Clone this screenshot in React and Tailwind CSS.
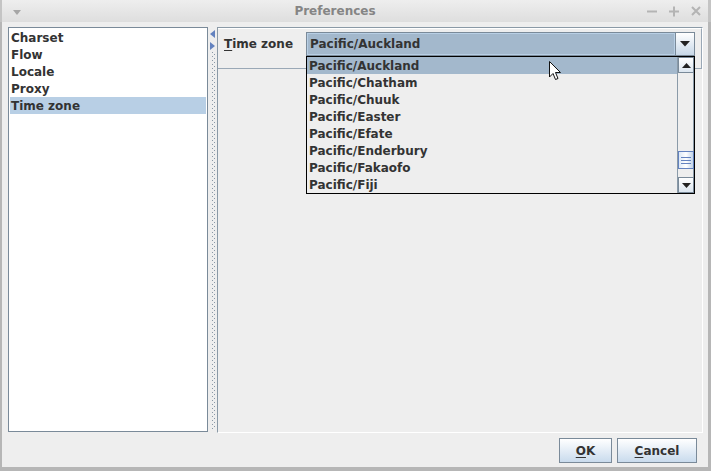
export default function App() {
  const zones = [
    "Pacific/Auckland",
    "Pacific/Chatham",
    "Pacific/Chuuk",
    "Pacific/Easter",
    "Pacific/Efate",
    "Pacific/Enderbury",
    "Pacific/Fakaofo",
    "Pacific/Fiji",
  ];
  const items = ["Charset", "Flow", "Locale", "Proxy", "Time zone"];
  return (
    <div className="relative w-[711px] h-[471px] flex flex-col bg-[#eeeeee] font-['DejaVu_Sans',sans-serif] text-[12px] font-bold text-[#333333] overflow-hidden leading-none">
      {/* title bar */}
      <div className="relative h-[22px] shrink-0 flex items-center justify-center pr-[40px] bg-gradient-to-b from-[#eeeeee] to-[#dedede] border-l-2 border-r-[3px] border-[#c4c4c4]">
        <svg className="absolute left-[11px] top-[10px]" width="8" height="5" viewBox="0 0 8 5">
          <path d="M0 0 H8 L4 5 Z" fill="#a6a6a6" />
        </svg>
        <span className="text-[#858585] text-[12px] font-bold">Preferences</span>
        <div className="absolute right-[6px] top-0 h-[22px] flex items-center gap-[10px] text-[#b4b4b4]">
          <svg width="12" height="12" viewBox="0 0 12 12"><path d="M1 6.5 H11" stroke="#b4b4b4" strokeWidth="2" /></svg>
          <svg width="12" height="12" viewBox="0 0 12 12"><path d="M1 6.5 H11 M6 1.5 V11.5" stroke="#b4b4b4" strokeWidth="2" /></svg>
          <svg width="12" height="12" viewBox="0 0 12 12"><path d="M2 2 L10 10 M10 2 L2 10" stroke="#b4b4b4" strokeWidth="2" /></svg>
        </div>
      </div>

      {/* body */}
      <div className="flex-1 flex flex-col border-l-2 border-r-[3px] border-b-4 border-[#b6b6b6]">
        <div className="flex pl-[6px] pt-[5px] h-[410px] shrink-0">
          {/* list */}
          <div className="w-[200px] h-[405px] border border-[#7a8a99] bg-white p-px">
            {items.map((it, i) => (
              <div
                key={it}
                className={`h-[17px] flex items-center pl-[1px] ${i === 4 ? "bg-[#b8cfe5]" : ""}`}
              >
                {it}
              </div>
            ))}
          </div>
          {/* divider */}
          <div className="relative w-[9px] h-[405px]">
            <svg className="absolute left-[2px] top-[3px]" width="5" height="8" viewBox="0 0 5 8">
              <path d="M5 0 V8 L0 4 Z" fill="#6382bf" />
            </svg>
            <svg className="absolute left-[2px] top-[15px]" width="5" height="8" viewBox="0 0 5 8">
              <path d="M0 0 V8 L5 4 Z" fill="#6382bf" />
            </svg>
            <div className="absolute left-[4px] top-[25px] bottom-[2px] w-px bg-[repeating-linear-gradient(to_bottom,#8a98a6_0px,#8a98a6_1px,transparent_1px,transparent_4px)]" />
            <div className="absolute left-[6px] top-[27px] bottom-[2px] w-px bg-[repeating-linear-gradient(to_bottom,#8a98a6_0px,#8a98a6_1px,transparent_1px,transparent_4px)]" />
          </div>
          {/* right panel */}
          <div className="w-[486px] h-[406px] border-l border-t border-[#8a99a6] border-r-white border-b-white border-r border-b flex flex-col">
            <div className="relative h-[41px] border-r border-b border-[#9aa8b6] border-t border-t-white flex items-start pl-[6px] pt-[3px]">
              <div className="w-[82px] h-[24px] flex items-center">
                <span><span className="underline underline-offset-2">T</span>ime zone</span>
              </div>
              <div className="relative w-[389px]">
                <div className="h-[24px] flex border border-[#7a8a99] bg-[#a3b8cc]">
                  <div className="flex-1 flex items-center pl-[2px] border border-[#b8cfe5]">
                    Pacific/Auckland
                  </div>
                  <div className="w-[19px] border-l border-[#7a8a99] bg-gradient-to-b from-[#ffffff] to-[#c8d8e8] flex items-center justify-center">
                    <svg width="10" height="6" viewBox="0 0 10 6"><path d="M0 0 H10 L5 5.5 Z" fill="#222" /></svg>
                  </div>
                </div>
                {/* popup */}
                <div className="absolute left-0 top-[24px] w-[389px] z-10 border border-black bg-[#eeeeee] flex">
                  <div className="flex-1 flex flex-col">
                    {zones.map((z, i) => (
                      <div
                        key={z}
                        className={`h-[17px] flex items-center pl-[2px] ${i === 0 ? "bg-[#a3b8cc]" : ""}`}
                      >
                        {z}
                      </div>
                    ))}
                  </div>
                  {/* scrollbar */}
                  <div className="w-[17px] flex flex-col border-l border-[#8a9aa8] bg-[#eeeeee]">
                    <div className="h-[16px] border border-[#7a8a99] bg-gradient-to-b from-white to-[#dce6f0] flex items-center justify-center">
                      <svg width="9" height="5" viewBox="0 0 9 5"><path d="M0 5 H9 L4.5 0 Z" fill="#222" /></svg>
                    </div>
                    <div className="flex-1 relative border-r border-[#8a9aa8]">
                      <div className="absolute left-0 right-[-1px] top-[78px] h-[18px] border border-[#6382bf] bg-gradient-to-r from-[#dce8f6] via-white to-[#c2d4ea] flex flex-col items-center justify-center gap-[2px]">
                        <div className="w-[10px] h-px bg-[#6382bf]" />
                        <div className="w-[10px] h-px bg-[#6382bf]" />
                        <div className="w-[10px] h-px bg-[#6382bf]" />
                      </div>
                    </div>
                    <div className="h-[16px] border border-[#7a8a99] bg-gradient-to-b from-white to-[#dce6f0] flex items-center justify-center">
                      <svg width="9" height="5" viewBox="0 0 9 5"><path d="M0 0 H9 L4.5 5 Z" fill="#222" /></svg>
                    </div>
                  </div>
                </div>
              </div>
            </div>
            <div className="flex-1" />
          </div>
        </div>

        {/* buttons */}
        <div className="flex justify-end gap-[5px] pt-[6px] pr-[11px]">
          <button className="w-[53px] h-[25px] border border-[#7a8a99] bg-gradient-to-b from-white to-[#c9dbed] flex items-center justify-center font-bold text-[#333]">
            <span><span className="underline underline-offset-2">O</span>K</span>
          </button>
          <button className="w-[80px] h-[25px] border border-[#7a8a99] bg-gradient-to-b from-white to-[#c9dbed] flex items-center justify-center font-bold text-[#333]">
            <span><span className="underline underline-offset-2">C</span>ancel</span>
          </button>
        </div>
      </div>

      {/* mouse cursor */}
      <svg className="absolute left-[549px] top-[61px] z-20" width="13" height="20" viewBox="0 0 13 20">
        <path d="M0.5 0.5 L0.5 16 L4 12.5 L6.5 18.5 L9 17.5 L6.5 11.5 L11.5 11.5 Z" fill="white" stroke="#111" strokeWidth="1" strokeLinejoin="round" />
      </svg>
    </div>
  );
}
